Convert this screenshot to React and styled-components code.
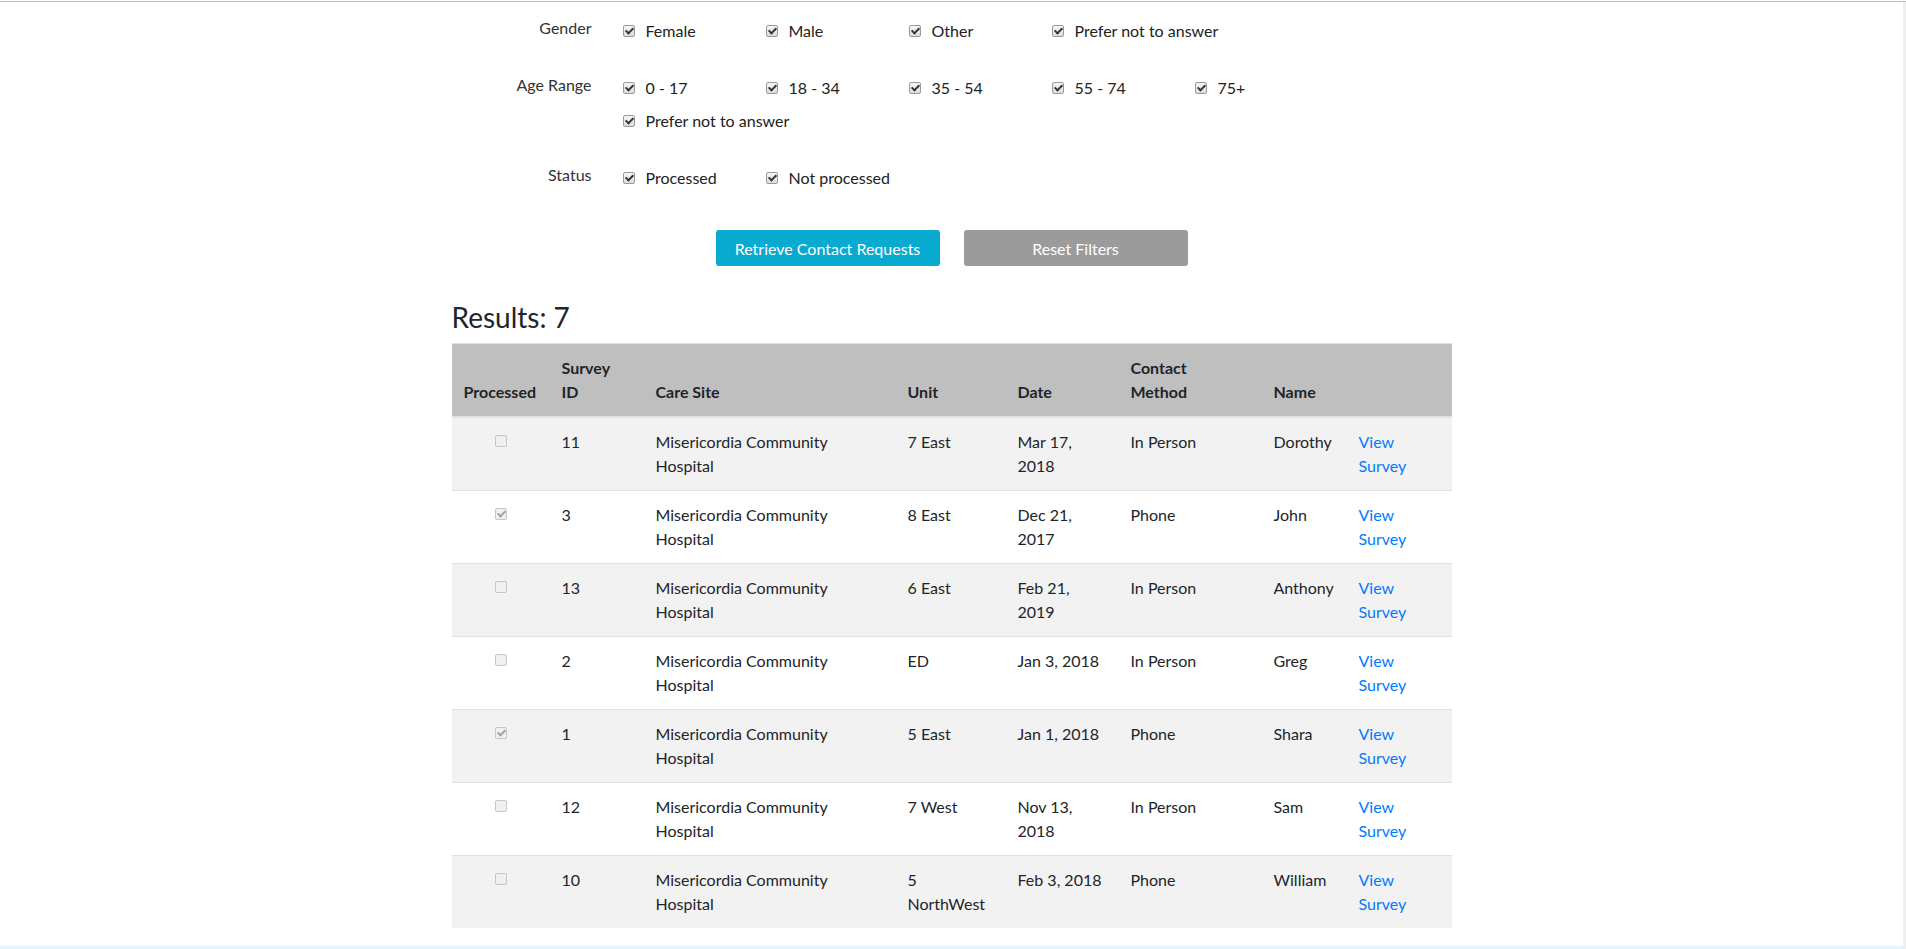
import React from 'react';
import styled, { createGlobalStyle } from 'styled-components';

const GlobalStyle = createGlobalStyle`
  body {
    margin: 0;
    background: #fff;
    color: #212529;
    font-family: Lato, "Open Sans", "Liberation Sans", sans-serif;
    font-size: 16px;
  }
`

const TopLine = styled.div`
  margin-top: 1px;
  height: 1px;
  background: #bdbdbd;
`

const Page = styled.div`
  display: flex;
`

const Main = styled.div`
  flex: 1;
`

const Strip = styled.div`
  width: 3px;
  background: #efefef;
`

const Container = styled.div`
  width: 1000px;
  margin: 0 auto;
`

const Filters = styled.form`
  padding-top: 12px;
  display: flex;
  flex-direction: column;
  gap: 24px;
`

const FilterRow = styled.div`
  display: grid;
  grid-template-columns: 140px 1fr;
  column-gap: 31px;
`

const FilterLabel = styled.div`
  text-align: right;
  line-height: 27px;
  color: #333;
`

const Options = styled.div`
  display: flex;
  flex-wrap: wrap;
  max-width: 800px;
`

const Option = styled.label`
  width: 143px;
  height: 33px;
  display: flex;
  align-items: center;
  gap: 11px;
  white-space: nowrap;
  color: #222;
`

const Check = styled.input.attrs({ type: 'checkbox' })`
  appearance: none;
  flex: none;
  position: relative;
  width: 12px;
  height: 12px;
  margin: 0;
  border: 1px solid ${p => (p.disabled ? '#c6c6c6' : '#9a9a9a')};
  border-radius: 2px;
  background: ${p => (p.disabled ? '#f0f0f0' : 'linear-gradient(#f6f6f6, #dcdcdc)')};

  &:checked::after {
    content: '';
    position: absolute;
    left: 3px;
    top: 0px;
    width: 3px;
    height: 6px;
    border: solid ${p => (p.disabled ? '#a0a0a0' : '#333')};
    border-width: 0 2px 2px 0;
    transform: rotate(45deg);
  }
`

const ButtonBar = styled.div`
  display: flex;
  justify-content: center;
  gap: 24px;
  margin-top: 36px;
`

const Button = styled.button`
  width: 224px;
  height: 36px;
  border: none;
  border-radius: 3px;
  background: ${p => p.bg};
  color: #fff;
  font-family: inherit;
  font-size: 16px;
  cursor: pointer;
`

const Results = styled.h3`
  margin: 34px 0 9px;
  font-size: 28px;
  font-weight: 400;
  line-height: 34px;
`

const Table = styled.table`
  width: 1000px;
  border-collapse: collapse;
  table-layout: fixed;
`

const Th = styled.th`
  text-align: left;
  vertical-align: bottom;
  padding: 12px;
  line-height: 24px;
  font-weight: 700;
  white-space: pre-line;
  background: #bfbfbf;
  border-top: 1px solid #dee2e6;
  border-bottom: 2px solid #dee2e6;
`

const Row = styled.tr`
  &:nth-child(odd) {
    background: #f2f2f2;
  }
`

const Td = styled.td`
  vertical-align: top;
  padding: 12px;
  line-height: 24px;
  border-top: 1px solid #dee2e6;
  text-align: ${p => (p.center ? 'center' : 'left')};
  white-space: pre-line;
`

const CellCheck = styled(Check)`
  display: inline-block;
  vertical-align: top;
  margin-top: 5px;
`

const ViewLink = styled.a`
  display: inline-block;
  width: min-content;
  color: #007bff;
  text-decoration: none;
`

const Footer = styled.div`
  margin-top: 18px;
  height: 24px;
  background: #e2f7fb;
`

const filters = [
  { label: 'Gender', options: ['Female', 'Male', 'Other', 'Prefer not to answer'] },
  { label: 'Age Range', options: ['0 - 17', '18 - 34', '35 - 54', '55 - 74', '75+', 'Prefer not to answer'] },
  { label: 'Status', options: ['Processed', 'Not processed'] },
]

const cols = [98, 94, 252, 110, 113, 143, 85, 105]
const heads = ['Processed', 'Survey\nID', 'Care Site', 'Unit', 'Date', 'Contact\nMethod', 'Name', '']

const rows = [
  { done: false, id: 11, unit: '7 East', date: 'Mar 17,\n2018', method: 'In Person', name: 'Dorothy' },
  { done: true, id: 3, unit: '8 East', date: 'Dec 21,\n2017', method: 'Phone', name: 'John' },
  { done: false, id: 13, unit: '6 East', date: 'Feb 21,\n2019', method: 'In Person', name: 'Anthony' },
  { done: false, id: 2, unit: 'ED', date: 'Jan 3, 2018', method: 'In Person', name: 'Greg' },
  { done: true, id: 1, unit: '5 East', date: 'Jan 1, 2018', method: 'Phone', name: 'Shara' },
  { done: false, id: 12, unit: '7 West', date: 'Nov 13,\n2018', method: 'In Person', name: 'Sam' },
  { done: false, id: 10, unit: '5\nNorthWest', date: 'Feb 3, 2018', method: 'Phone', name: 'William' },
]

const App = () => {
  return <>
    <GlobalStyle />
    <TopLine />
    <Page>
      <Main>
        <Container>
          <Filters onSubmit={e => e.preventDefault()}>
            {filters.map(f => (
              <FilterRow key={f.label}>
                <FilterLabel>{f.label}</FilterLabel>
                <Options>
                  {f.options.map(o => (
                    <Option key={o}>
                      <Check defaultChecked />
                      {o}
                    </Option>
                  ))}
                </Options>
              </FilterRow>
            ))}
          </Filters>

          <ButtonBar>
            <Button bg="#09aacf">Retrieve Contact Requests</Button>
            <Button bg="#9b9b9b">Reset Filters</Button>
          </ButtonBar>

          <Results>Results: 7</Results>

          <Table>
            <colgroup>
              {cols.map((w, i) => <col key={i} style={{ width: w }} />)}
            </colgroup>
            <thead>
              <tr>
                {heads.map((h, i) => <Th key={i}>{h}</Th>)}
              </tr>
            </thead>
            <tbody>
              {rows.map(r => (
                <Row key={r.id}>
                  <Td center><CellCheck disabled defaultChecked={r.done} /></Td>
                  <Td>{r.id}</Td>
                  <Td>Misericordia Community Hospital</Td>
                  <Td>{r.unit}</Td>
                  <Td>{r.date}</Td>
                  <Td>{r.method}</Td>
                  <Td>{r.name}</Td>
                  <Td><ViewLink href="#">View Survey</ViewLink></Td>
                </Row>
              ))}
            </tbody>
          </Table>
        </Container>
        <Footer />
      </Main>
      <Strip />
    </Page>
  </>
}

export default App
